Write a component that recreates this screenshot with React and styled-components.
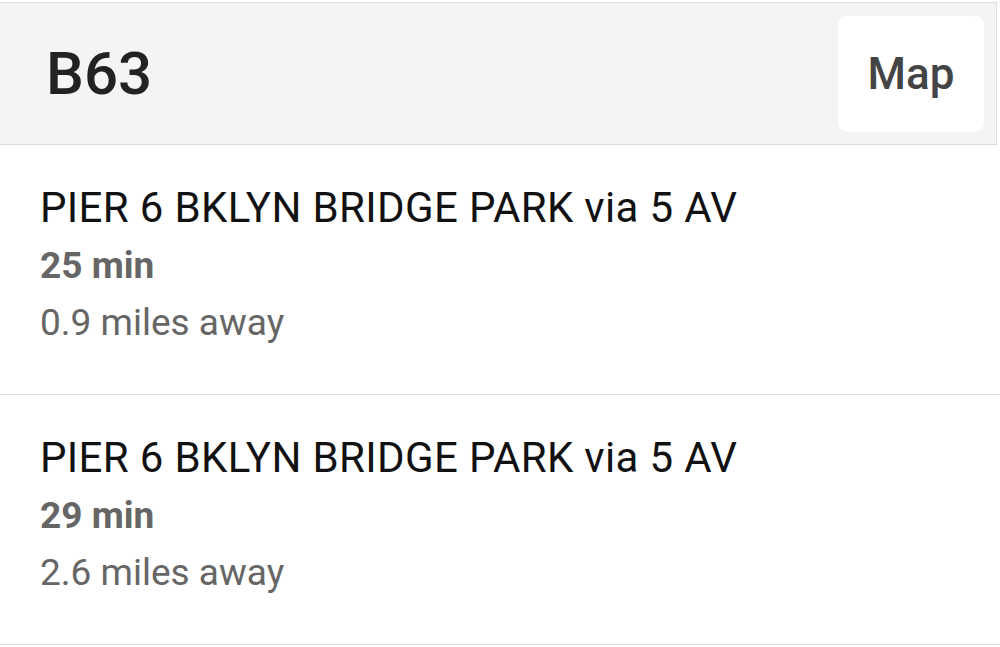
import React from "react"
import styled, { createGlobalStyle } from "styled-components"

const GlobalStyle = createGlobalStyle`
  html, body {
    margin: 0;
    padding: 0;
    background: #ffffff;
    font-family: Roboto, "Liberation Sans", Arial, sans-serif;
  }
`

const Page = styled.div`
  width: 1000px;
  height: 647px;
  overflow: hidden;
  padding-top: 2px;
  box-sizing: border-box;
`

const Header = styled.div`
  width: 997px;
  height: 143px;
  box-sizing: border-box;
  display: flex;
  align-items: center;
  justify-content: space-between;
  background: #f4f4f4;
  border: 1px solid #dcdcdc;
  border-left: none;
  padding: 0 12px 0 46px;
`

const RouteName = styled.h1`
  margin: 0;
  font-size: 60px;
  font-weight: 500;
  color: #222222;
`

const MapButton = styled.button`
  width: 146px;
  height: 116px;
  border: none;
  border-radius: 9px;
  background: #ffffff;
  color: #444444;
  font-family: inherit;
  font-size: 44px;
  font-weight: 500;
  padding: 0;
  cursor: pointer;
`

const List = styled.div`
  display: flex;
  flex-direction: column;
`

const Row = styled.div`
  height: 250px;
  box-sizing: border-box;
  padding: 34px 40px 0;
  border-bottom: 1px solid #dcdcdc;
  display: flex;
  flex-direction: column;
`

const Destination = styled.div`
  font-size: 42px;
  line-height: 58px;
  letter-spacing: 0.35px;
  color: #111111;
`

const Eta = styled.div`
  font-size: 37px;
  line-height: 57px;
  font-weight: 700;
  color: #666666;
`

const Distance = styled.div`
  font-size: 37px;
  line-height: 57px;
  color: #666666;
`

const arrivals = [
  { dest: "PIER 6 BKLYN BRIDGE PARK via 5 AV", eta: "25 min", dist: "0.9 miles away" },
  { dest: "PIER 6 BKLYN BRIDGE PARK via 5 AV", eta: "29 min", dist: "2.6 miles away" },
]

const App = () => {
  return (
    <Page>
      <GlobalStyle />
      <Header>
        <RouteName>B63</RouteName>
        <MapButton>Map</MapButton>
      </Header>
      <List>
        {arrivals.map((a, i) => (
          <Row key={i}>
            <Destination>{a.dest}</Destination>
            <Eta>{a.eta}</Eta>
            <Distance>{a.dist}</Distance>
          </Row>
        ))}
      </List>
    </Page>
  )
}

export default App
